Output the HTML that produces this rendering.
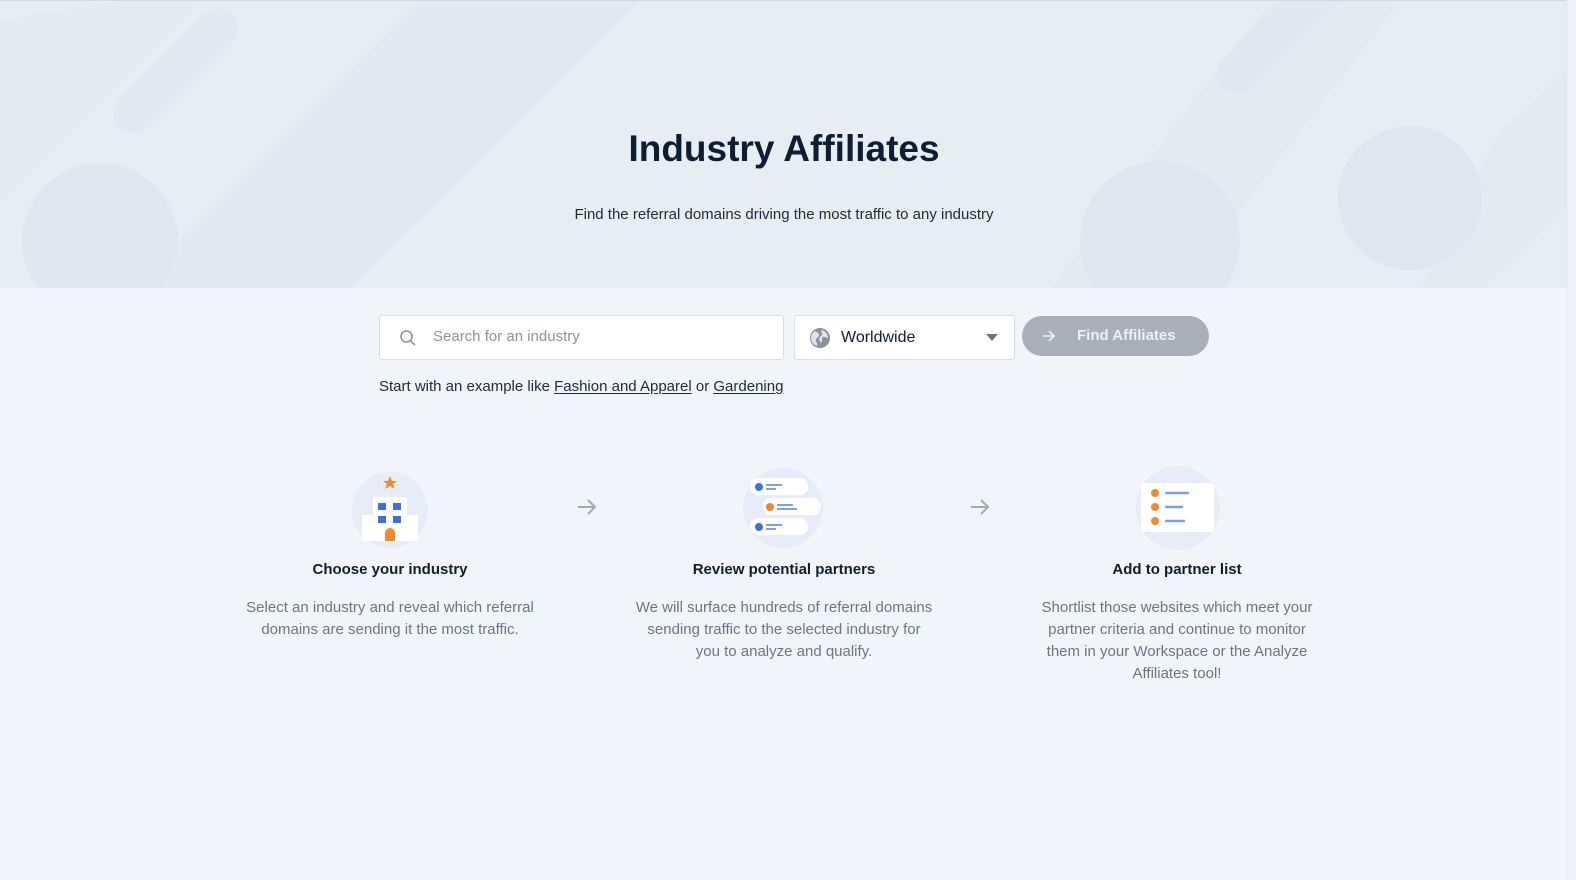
<!DOCTYPE html>
<html><head><meta charset="utf-8"><style>
*{box-sizing:border-box;margin:0;padding:0}
body{width:1576px;height:880px;overflow:hidden;background:#f1f5fa;font-family:"Liberation Sans",sans-serif;position:relative}
.hero{position:absolute;left:0;top:0;width:1576px;height:288px;background:#e8ecf3;overflow:hidden;border-top:1px solid #d5d9e0}
.hero svg{position:absolute;left:0;top:0}
h1{position:absolute;top:128px;width:1568px;text-align:center;font-size:37px;font-weight:700;color:#0f1d33}
.sub{position:absolute;top:206px;width:1568px;text-align:center;font-size:15px;color:#1d2a3e}
.search{position:absolute;left:379px;top:315px;width:405px;height:45px;background:#fff;border:1px solid #d9dee6;border-radius:3px}
.search span{position:absolute;left:53px;top:12px;font-size:15px;color:#8a93a0}
.sel{position:absolute;left:794px;top:315px;width:221px;height:45px;background:#fff;border:1px solid #d9dee6;border-radius:3px}
.sel span{position:absolute;left:46px;top:13px;font-size:16px;color:#0f1d33}
.btn{position:absolute;left:1022px;top:316px;width:187px;height:40px;background:#a9afb9;border-radius:20px;color:#eef0f3;font-size:15px;font-weight:700}
.btn span{position:absolute;left:55px;top:11px}
.ex{position:absolute;left:379px;top:378px;font-size:15px;color:#1d2a3e}
.ex u{text-underline-offset:2px}
.step{position:absolute;top:561px;width:400px;text-align:center}
.step b{display:block;font-size:15px;color:#0f1d33;margin-bottom:19px}
.step p{font-size:15px;line-height:22px;color:#6b7584}
.arr{position:absolute;top:497px}
</style></head><body>
<div class="hero">
<svg width="1576" height="288">
<g fill="#dfe4ec" opacity=".7">
<circle cx="100" cy="240" r="78"/>
<circle cx="1160" cy="240" r="80"/>
<circle cx="1410" cy="197" r="72"/>
<path d="M420 0 L640 0 L350 288 L130 288Z" opacity=".6"/>
<path d="M1270 0 L1400 0 L1180 288 L1050 288Z" opacity=".5"/>
<path d="M1500 130 L1576 60 L1576 200 L1480 288 L1420 288Z" opacity=".5"/>
<rect x="180" y="50" width="40" height="160" rx="20" transform="rotate(45 260 70)" opacity=".7"/>
<rect x="1280" y="0" width="40" height="160" rx="20" transform="rotate(45 1350 30)" opacity=".7"/>
<path d="M0 20 L120 0 L200 0 L0 200Z" opacity=".4"/>
</g></svg></div>
<h1>Industry Affiliates</h1>
<div class="sub">Find the referral domains driving the most traffic to any industry</div>
<div class="search"><svg style="position:absolute;left:19px;top:13px" width="18" height="18" viewBox="0 0 18 18" fill="none" stroke="#8a93a0" stroke-width="1.6"><circle cx="7.5" cy="7.5" r="5.5"/><path d="M11.5 11.5L16 16"/></svg><span>Search for an industry</span></div>
<div class="sel"><svg style="position:absolute;left:14px;top:11px" width="22" height="22" viewBox="0 0 22 22"><circle cx="11" cy="11" r="10" fill="#8a919c"/><path d="M6 4c2 2 4 1 4 4s-3 2-3 5 2 3 1 6c-3-1-6-4-6-8 0-3 2-6 4-7zM13 3c3 1 6 4 6 8-2 0-3-2-5-1s0 4-2 6c-1-2-3-4-1-6s3-2 2-4-1-2 0-3z" fill="#e2e5ea"/></svg><span>Worldwide</span><svg style="position:absolute;left:191px;top:18px" width="12" height="8"><path d="M0 0h12L6 7z" fill="#6b7584"/></svg></div>
<div class="btn"><svg style="position:absolute;left:20px;top:13px" width="14" height="14" viewBox="0 0 14 14" fill="none" stroke="#eef0f3" stroke-width="1.6"><path d="M1 7h11M7 2l5 5-5 5"/></svg><span>Find Affiliates</span></div>
<div class="ex">Start with an example like <u>Fashion and Apparel</u> or <u>Gardening</u></div>

<svg style="position:absolute;left:345px;top:465px" width="90" height="90"><circle cx="45" cy="45" r="38" fill="#e6edf9"/><rect x="17" y="50" width="56" height="26" fill="#fff"/><rect x="28" y="32" width="34" height="44" fill="#fff"/><rect x="33" y="38" width="8" height="7" fill="#3d6fe0"/><rect x="48" y="38" width="8" height="7" fill="#3d6fe0"/><rect x="33" y="51" width="8" height="7" fill="#3d6fe0"/><rect x="48" y="51" width="8" height="7" fill="#3d6fe0"/><path d="M40 76v-8a5 5 0 0 1 10 0v8z" fill="#f5892a"/><path d="M45 11l2 5h5l-4 3 2 5-5-3-5 3 2-5-4-3h5z" fill="#f5892a"/></svg>
<svg class="arr" style="left:577px" width="20" height="20" viewBox="0 0 20 20" fill="none" stroke="#a3a9b3" stroke-width="2"><path d="M1 10h17M11 3l7 7-7 7"/></svg>
<svg style="position:absolute;left:735px;top:465px" width="95" height="90"><circle cx="48" cy="43" r="40" fill="#e6edf9"/><rect x="15" y="13" width="58" height="17" rx="8.5" fill="#fff"/><rect x="28" y="33" width="58" height="17" rx="8.5" fill="#fff"/><rect x="15" y="53" width="58" height="17" rx="8.5" fill="#fff"/><circle cx="24" cy="22" r="4" fill="#3d6fe0"/><circle cx="35" cy="42" r="4" fill="#f5892a"/><circle cx="24" cy="62" r="4" fill="#3d6fe0"/><g stroke="#7ea0ea" stroke-width="2"><path d="M31 20h16M31 24h10M42 40h16M42 44h20M31 60h16M31 64h10"/></g></svg>
<svg class="arr" style="left:970px" width="20" height="20" viewBox="0 0 20 20" fill="none" stroke="#a3a9b3" stroke-width="2"><path d="M1 10h17M11 3l7 7-7 7"/></svg>
<svg style="position:absolute;left:1128px;top:465px" width="100" height="90"><circle cx="50" cy="43" r="42" fill="#e6edf9"/><rect x="13" y="18" width="73" height="49" rx="4" fill="#fff"/><circle cx="27" cy="28" r="4" fill="#f5892a"/><circle cx="27" cy="42" r="4" fill="#f5892a"/><circle cx="27" cy="56" r="4" fill="#f5892a"/><g stroke="#7ea0ea" stroke-width="2.5"><path d="M37 28h24M37 42h18M37 56h20"/></g></svg>

<div class="step" style="left:190px"><b>Choose your industry</b><p>Select an industry and reveal which referral<br>domains are sending it the most traffic.</p></div>
<div class="step" style="left:584px"><b>Review potential partners</b><p>We will surface hundreds of referral domains<br>sending traffic to the selected industry for<br>you to analyze and qualify.</p></div>
<div class="step" style="left:977px"><b>Add to partner list</b><p>Shortlist those websites which meet your<br>partner criteria and continue to monitor<br>them in your Workspace or the Analyze<br>Affiliates tool!</p></div>
<div style="position:absolute;left:1566px;top:0;width:10px;height:880px;background:#eef2f7;border-left:1px solid #e2e6ec"></div>
</body></html>
